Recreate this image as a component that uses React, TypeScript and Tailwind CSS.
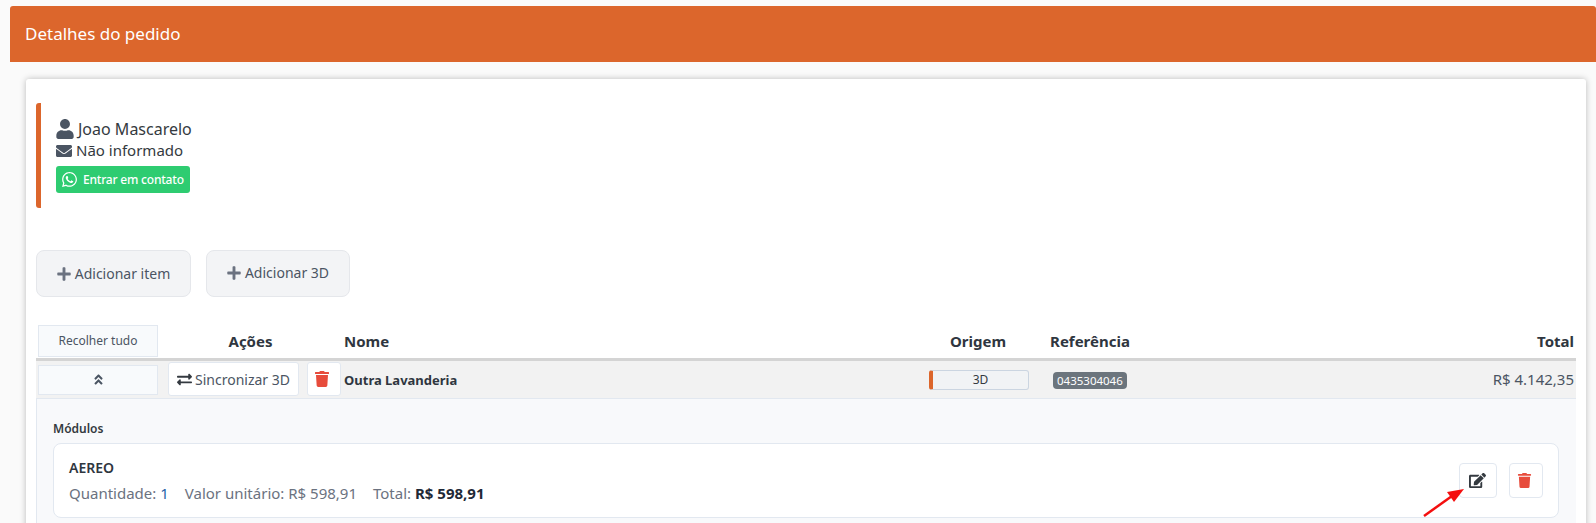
import React from "react";
import { FaUser, FaEnvelope, FaWhatsapp, FaPlus, FaExchangeAlt, FaTrash, FaAngleDoubleUp, FaEdit } from "react-icons/fa";

export default function App() {
  return (
    <div className="relative h-[523px] overflow-hidden bg-[#fafafa] pl-[10px] pt-[6px] font-['Noto_Sans','Open_Sans',sans-serif] text-[#343a40]">
      <div className="flex h-[56px] items-center rounded-t-[3px] bg-[#dc662c] pl-[15px] text-[17px] text-white">Detalhes do pedido</div>
      <div className="ml-[16px] mt-[17px] h-[500px] w-[1560px] rounded-[3px] bg-white px-[10px] pt-[24px] shadow-[0_0_6px_rgba(0,0,0,0.25)]">
        <div className="flex h-[105px] flex-col rounded-l-[3px] border-l-[5px] border-[#dc662c] pl-[15px] pt-[14px]">
          <div className="flex h-[24px] items-center gap-[4px] text-[16px] leading-none text-[#343a40]">
            <FaUser className="text-[18px] scale-x-110 scale-y-110 text-[#4b5563]" />
            <span>Joao Mascarelo</span>
          </div>
          <div className="flex h-[19px] items-center gap-[4px] text-[15px] leading-none">
            <FaEnvelope className="text-[16px] text-[#4b5563]" />
            <span>Não informado</span>
          </div>
          <div className="mt-[6px] flex h-[27px] w-[134px] items-center gap-[5px] rounded-[3px] bg-[#2ecc71] pl-[5px] text-[12px] font-medium leading-none tracking-[-0.2px] text-white">
            <FaWhatsapp className="text-[17px]" />
            <span>Entrar em contato</span>
          </div>
        </div>
        <div className="mt-[42px] flex gap-[15px]">
          <div className="flex h-[47px] w-[155px] items-center justify-center gap-[4px] rounded-[8px] border border-[#e5e7eb] bg-[#f3f4f6] text-[14px] text-[#4b5563]">
            <FaPlus className="text-[14px] scale-110 text-[#6b7280]" />
            <span>Adicionar item</span>
          </div>
          <div className="flex h-[47px] w-[144px] items-center justify-center gap-[4px] rounded-[8px] border border-[#e5e7eb] bg-[#f3f4f6] pb-[2px] text-[14px] text-[#4b5563]">
            <FaPlus className="text-[14px] scale-110 text-[#6b7280]" />
            <span>Adicionar 3D</span>
          </div>
        </div>
        <div className="mt-[28px] w-[1540px]">
          <div className="flex h-[33px] items-start pl-[2px] text-[15px] font-bold text-[#2f3640]">
            <div className="flex h-[32px] w-[120px] items-center justify-center border border-[#e2e8f0] bg-[#f8fafc] text-[12px] font-normal text-[#4b5563]">Recolher tudo</div>
            <div className="flex h-[32px] w-[184px] items-center justify-center pl-[1px]">Ações</div>
            <div className="flex h-[32px] w-[574px] items-center pl-[2px]">Nome</div>
            <div className="flex h-[32px] w-[124px] items-center justify-center">Origem</div>
            <div className="flex h-[32px] w-[100px] items-center justify-center">Referência</div>
            <div className="flex h-[32px] flex-1 items-center justify-end pr-[2px]">Total</div>
          </div>
          <div className="flex h-[41px] items-center border-b border-t-[3px] border-b-[#e2e8f0] border-t-[#d4d4d4] bg-[#f2f2f2] pl-[2px]">
            <div className="flex h-[30px] w-[120px] items-center justify-center border border-[#e2e8f0] bg-[#f8fafc] text-[#4b5563]">
              <FaAngleDoubleUp className="text-[13px]" />
            </div>
            <div className="ml-[10px] mb-[1px] flex h-[34px] w-[131px] items-center justify-center gap-[3px] rounded-[3px] border border-[#e2e8f0] bg-white text-[14px] text-[#4b5563]">
              <FaExchangeAlt className="text-[15px] text-[#343a40]" />
              <span>Sincronizar 3D</span>
            </div>
            <div className="ml-[8px] mb-[1px] flex h-[34px] w-[34px] items-center justify-center rounded-[3px] border border-[#e2e8f0] bg-white pr-[4px]">
              <FaTrash className="text-[16px] text-[#e74c3c]" />
            </div>
            <div className="ml-[3px] w-[585px] pt-[2px] text-[13px] font-bold leading-none text-[#2f3640]">Outra Lavanderia</div>
            <div className="flex h-[20px] w-[100px] items-center justify-center rounded-[3px] border border-l-[4px] border-[#cbd5e1] border-l-[#dc662c] bg-[#f1f3f5] text-[12px]">3D</div>
            <div className="ml-[24px] mt-[1px] rounded-[4px] bg-[#6c757d] px-[4px] text-[11.5px] leading-[17px] text-white">0435304046</div>
            <div className="flex-1 pr-[2px] text-right text-[15px] text-[#4b5563]">R$ 4.142,35</div>
          </div>
          <div className="h-[130px] border-l border-[#e2e8f0] bg-[#f8f9fb] pl-[16px] pr-[17px] pt-[21px]">
            <div className="text-[12px] font-semibold leading-[18px] text-[#343a40]">Módulos</div>
            <div className="mt-[5px] flex h-[75px] items-center justify-between rounded-[8px] border border-[#e2e8f0] bg-white pl-[15px] pr-[15px]">
              <div className="flex flex-col">
                <div className="text-[14px] font-semibold leading-[20px] text-[#2f3640]">AEREO</div>
                <div className="mt-[5px] flex gap-[16px] text-[15px] leading-[20px] text-[#6b7280]">
                  <span>Quantidade: <span className="text-[#2563a8]">1</span></span>
                  <span>Valor unitário: R$ 598,91</span>
                  <span>Total: <span className="font-bold text-[#1f2937]">R$ 598,91</span></span>
                </div>
              </div>
              <div className="flex items-center gap-[12px]">
                <div className="flex h-[35px] w-[38px] items-center justify-center rounded-[4px] border border-[#e2e8f0] bg-white pr-[2px]">
                  <FaEdit className="text-[17px] text-[#343a40]" />
                </div>
                <div className="flex h-[35px] w-[34px] items-center justify-center rounded-[4px] border border-[#e2e8f0] bg-white pr-[3px]">
                  <FaTrash className="text-[15px] text-[#e74c3c]" />
                </div>
              </div>
            </div>
          </div>
        </div>
      </div>
      <svg className="absolute left-[1420px] top-[484px]" width="50" height="36" viewBox="0 0 50 36">
        <line x1="4" y1="32" x2="32" y2="12" stroke="#f40f0f" strokeWidth="2.5" />
        <polygon points="44,5 27,8 34,18" fill="#f40f0f" />
      </svg>
    </div>
  );
}
